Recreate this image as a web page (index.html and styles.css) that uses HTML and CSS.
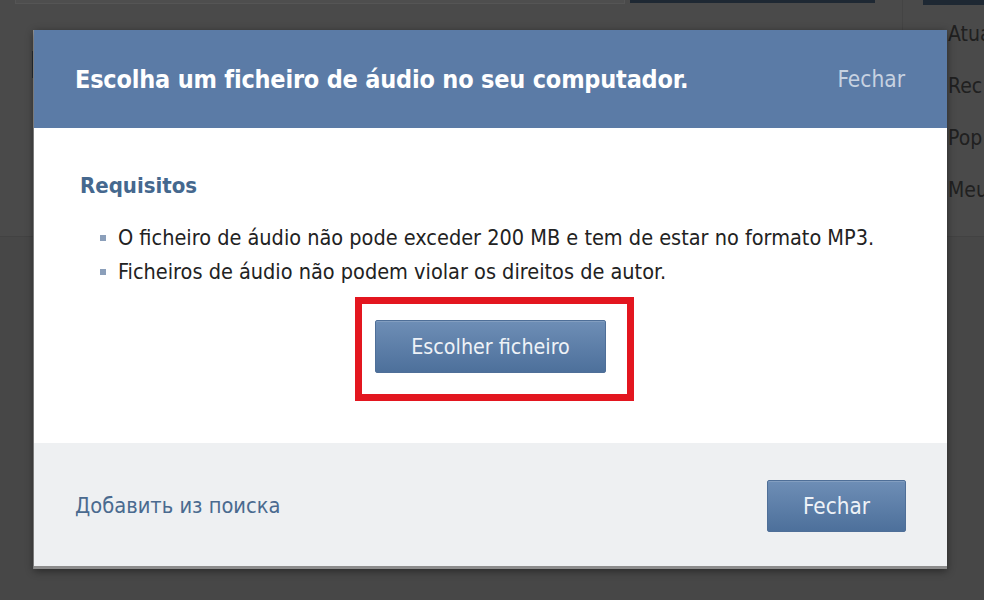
FILE: index.html
```html
<!DOCTYPE html>
<html lang="pt">
<head>
<meta charset="utf-8">
<title>Escolha um ficheiro de áudio</title>
<link rel="stylesheet" href="styles.css">
</head>
<body>
<div class="page">
  <div class="page-top">
    <div class="main-col">
      <div class="topbar">
        <div class="search-box"></div>
        <div class="nav-btn"></div>
      </div>
      <div class="side-mark"></div>
    </div>
    <div class="right-col">
      <div class="right-btn"></div>
      <ul class="right-menu">
        <li>Atua</li>
        <li>Rec</li>
        <li>Pop</li>
        <li>Meu</li>
      </ul>
    </div>
  </div>
  <div class="page-bottom"></div>
</div>

<div class="modal">
  <div class="modal-head">
    <h1 class="modal-title">Escolha um ficheiro de áudio no seu computador.</h1>
    <span class="head-close">Fechar</span>
  </div>
  <div class="modal-body">
    <h2 class="req-title">Requisitos</h2>
    <ul class="req-list">
      <li>O ficheiro de áudio não pode exceder 200 MB e tem de estar no formato MP3.</li>
      <li>Ficheiros de áudio não podem violar os direitos de autor.</li>
    </ul>
    <div class="choose-wrap">
      <div class="highlight">
        <button class="btn btn-choose">Escolher ficheiro</button>
      </div>
    </div>
  </div>
  <div class="modal-foot">
    <span class="foot-link">Добавить из поиска</span>
    <button class="btn btn-close">Fechar</button>
  </div>
</div>
</body>
</html>
```

FILE: styles.css
```css
html, body {
  margin: 0;
  padding: 0;
  width: 984px;
  height: 600px;
  overflow: hidden;
  background: #474747;
  font-family: "DejaVu Sans Condensed", "DejaVu Sans", sans-serif;
}

.page {
  width: 984px;
  height: 600px;
  display: flex;
  flex-direction: column;
}

.page-top {
  height: 236px;
  background: #4a4a4a;
  border-bottom: 1px solid #424242;
  display: flex;
}

.main-col {
  width: 902px;
  border-right: 1px solid #444;
}

.topbar {
  display: flex;
  align-items: flex-start;
  padding-left: 15px;
}

.search-box {
  width: 608px;
  height: 3px;
  background: #4e4e4e;
  border: 1px solid #555;
  border-top: none;
}

.nav-btn {
  margin-left: 5px;
  width: 245px;
  height: 3px;
  background: #1e2833;
}

.side-mark {
  margin: 47px 0 0 32px;
  width: 3px;
  height: 27px;
  background: #262c33;
}

.right-col {
  flex: 1;
  padding-left: 20px;
  overflow: hidden;
}

.right-btn {
  height: 5px;
  background: #1e2833;
}

.right-menu {
  list-style: none;
  margin: 12px 0 0;
  padding: 0 0 0 25px;
  font-size: 21px;
  color: #202020;
  white-space: nowrap;
}

.right-menu li {
  height: 52px;
  line-height: 34px;
}

.page-bottom {
  flex: 1;
}

/* modal */
.modal {
  position: absolute;
  left: 34px;
  top: 30px;
  width: 913px;
  background: #fff;
  border-bottom: 3px solid #8c8c8c;
  box-shadow: 0 2px 8px rgba(0, 0, 0, 0.45), -1px 0 0 #9a9a9a;
}

.modal-head {
  height: 98px;
  background: #5b7ba6;
  display: flex;
  align-items: center;
  justify-content: space-between;
  padding: 0 42px 0 41px;
}

.modal-title {
  margin: 0;
  font-size: 25px;
  font-weight: bold;
  color: #fff;
  letter-spacing: -0.2px;
}

.head-close {
  font-size: 22.5px;
  color: #c7d2e1;
}

.modal-body {
  height: 315px;
  padding: 0 0 0 46px;
  box-sizing: border-box;
}

.req-title {
  margin: 0;
  padding-top: 45px;
  font-size: 22px;
  font-weight: bold;
  color: #45688e;
  line-height: 26px;
}

.req-list {
  list-style: none;
  margin: 22px 0 0;
  padding: 0 0 0 20px;
  font-size: 21.5px;
  color: #222;
}

.req-list li {
  line-height: 34px;
  display: flex;
  align-items: center;
}

.req-list li::before {
  content: "";
  width: 6px;
  height: 6px;
  background: #8b9fba;
  margin-right: 12px;
  flex: none;
}

.choose-wrap {
  display: flex;
  justify-content: center;
  margin-top: 8px;
  padding-right: 46px;
}

.highlight {
  border: 7px solid #e3161f;
  padding: 16px 21px 21px 13px;
  margin-left: 8px;
}

.btn {
  font-family: "DejaVu Sans Condensed", sans-serif;
  color: #eef2f7;
  background: linear-gradient(#6e8eb6, #4d709b);
  border: 1px solid #4f6f98;
  border-radius: 2px;
  box-shadow: inset 0 1px 0 rgba(255, 255, 255, 0.15);
  padding: 0;
}

.btn-choose {
  display: block;
  width: 231px;
  height: 53px;
  font-size: 21.3px;
}

.modal-foot {
  height: 123px;
  background: #eef0f2;
  display: flex;
  align-items: center;
  justify-content: space-between;
  padding: 2px 41px 0 41px;
  box-sizing: border-box;
}

.foot-link {
  font-size: 21.7px;
  color: #4a6a8f;
}

.btn-close {
  width: 139px;
  height: 52px;
  font-size: 22.3px;
}
```
